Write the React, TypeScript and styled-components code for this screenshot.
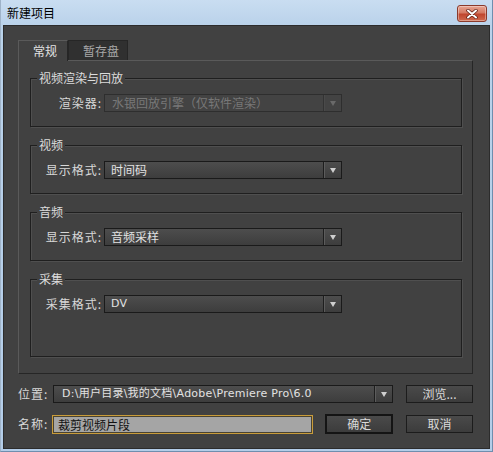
import React from "react";
import styled, { createGlobalStyle } from "styled-components";

const Global = createGlobalStyle`
  html, body { margin: 0; padding: 0; background: #c3d8ee; }
  body {
    font-family: "Noto Sans CJK SC", "Noto Sans", sans-serif;
    font-size: 12px;
  }
  * { box-sizing: border-box; }
`;

const Window = styled.div`
  width: 493px;
  height: 452px;
  display: flex;
  flex-direction: column;
  background: linear-gradient(to bottom, #c9ddf1 0px, #bad2ea 25px, #b4cde8 100%);
  border-left: 1px solid #9fb3c8;
  border-right: 1px solid #6f8eae;
  border-bottom: 1px solid #6f8eae;
`;

const TitleBar = styled.div`
  height: 25px;
  flex: none;
  display: flex;
  align-items: flex-start;
  justify-content: space-between;
  padding: 0 5px 0 6px;
`;

const Title = styled.div`
  line-height: 25px;
  color: #000;
  font-size: 12px;
`;

const CloseButton = styled.div`
  margin-top: 5px;
  width: 30px;
  height: 17px;
  border: 1px solid #8a3a2c;
  border-radius: 3px;
  background: linear-gradient(to bottom, #e8a593 0%, #d47a63 45%, #c0462e 55%, #cf6a4e 100%);
  box-shadow: inset 0 0 0 1px rgba(255, 255, 255, 0.35);
  display: flex;
  align-items: center;
  justify-content: center;
`;

const Body = styled.div`
  flex: 1;
  margin: 0 2px 3px 2px;
  background: #414141;
  border: 1px solid #2c2c2c;
  padding: 14px 16px 14px 14px;
  display: flex;
  flex-direction: column;
`;

const TabBar = styled.div`
  display: flex;
  height: 20px;
  flex: none;
`;

const Tab = styled.div<{ $active?: boolean }>`
  width: ${(p) => (p.$active ? "50px" : "60px")};
  height: ${(p) => (p.$active ? "21px" : "20px")};
  margin-bottom: ${(p) => (p.$active ? "-1px" : "0")};
  padding-left: 14px;
  line-height: 19px;
  color: ${(p) => (p.$active ? "#e2e2e2" : "#a8a8a8")};
  background: ${(p) => (p.$active ? "#414141" : "#303030")};
  border-top: 1px solid ${(p) => (p.$active ? "#5a5a5a" : "#262626")};
  border-left: 1px solid ${(p) => (p.$active ? "#5a5a5a" : "#262626")};
  border-right: 1px solid #262626;
  position: relative;
  z-index: ${(p) => (p.$active ? 1 : 0)};
`;

const Panel = styled.div`
  height: 314px;
  flex: none;
  border-top: 1px solid #5a5a5a;
  border-left: 1px solid #5a5a5a;
  border-right: 1px solid #262626;
  border-bottom: 1px solid #262626;
  padding: 17px 10px 0 11px;
  display: flex;
  flex-direction: column;
  gap: 18px;
`;

const Group = styled.div<{ $tall?: boolean }>`
  position: relative;
  border: 1px solid #1f1f1f;
  box-shadow: 1px 1px 0 #4f4f4f, inset 1px 1px 0 #4f4f4f;
  padding: ${(p) => (p.$tall ? "15px 0 43px" : "15px 0 14px")};
`;

const Legend = styled.span`
  position: absolute;
  top: -9px;
  left: 6px;
  padding: 0 2px;
  background: #414141;
  color: #dcdcdc;
  line-height: 16px;
`;

const FieldRow = styled.div`
  display: flex;
  align-items: center;
`;

const FieldLabel = styled.div`
  width: 71px;
  margin-right: 2px;
  text-align: right;
  color: #d8d8d8;
  line-height: 18px;
  letter-spacing: 1px;
`;

const SelectBox = styled.div<{ $width: number; $disabled?: boolean }>`
  width: ${(p) => p.$width}px;
  height: 18px;
  display: flex;
  border: 1px solid ${(p) => (p.$disabled ? "#2e2e2e" : "#1a1a1a")};
  background: ${(p) =>
    p.$disabled ? "#434343" : "linear-gradient(to bottom, #4d4d4d, #3d3d3d)"};
  color: ${(p) => (p.$disabled ? "#787878" : "#e2e2e2")};
`;

const SelectText = styled.div<{ $latin?: boolean; $pad: number }>`
  flex: 1;
  padding-left: ${(p) => p.$pad}px;
  line-height: 16px;
  white-space: nowrap;
  overflow: hidden;
  letter-spacing: ${(p) => (p.$latin ? "0.25px" : "0")};
  font-family: ${(p) =>
    p.$latin
      ? `"DejaVu Sans", "Noto Sans CJK SC", sans-serif`
      : `"Noto Sans CJK SC", sans-serif`};
  font-size: ${(p) => (p.$latin ? "11px" : "12px")};
`;

const ArrowCell = styled.div<{ $disabled?: boolean }>`
  width: 18px;
  flex: none;
  border-left: 1px solid ${(p) => (p.$disabled ? "#333" : "#1e1e1e")};
  box-shadow: inset 1px 0 0 ${(p) => (p.$disabled ? "#4a4a4a" : "#5c5c5c")};
  display: flex;
  align-items: center;
  justify-content: center;
`;

const Arrow = styled.div<{ $disabled?: boolean }>`
  width: 0;
  height: 0;
  border-left: 3.5px solid transparent;
  border-right: 3.5px solid transparent;
  border-top: 5px solid ${(p) => (p.$disabled ? "#6a6a6a" : "#cfcfcf")};
`;

const BottomRows = styled.div`
  margin-top: 11px;
  display: flex;
  flex-direction: column;
  gap: 11px;
`;

const BottomRow = styled.div`
  display: flex;
  align-items: center;
`;

const RowLabel = styled.div<{ $width: number }>`
  width: ${(p) => p.$width}px;
  color: #d8d8d8;
  line-height: 18px;
  letter-spacing: 1px;
`;

const Button = styled.div<{ $default?: boolean }>`
  width: ${(p) => (p.$default ? "68px" : "67px")};
  height: ${(p) => (p.$default ? "20px" : "18px")};
  margin-left: ${(p) => (p.$default ? "12px" : "13px")};
  border: ${(p) => (p.$default ? "2px solid #141414" : "1px solid #1c1c1c")};
  background: linear-gradient(to bottom, #4a4a4a, #3c3c3c);
  color: #dadada;
  display: flex;
  align-items: center;
  justify-content: center;
  line-height: 16px;
`;

const NameInput = styled.div`
  width: 262px;
  height: 19px;
  border: 1px solid #c99c3a;
  box-shadow: inset 0 0 0 1px #4a4330;
  background: #a5a5a5;
  color: #111;
  padding-left: 5px;
  line-height: 17px;
`;

type SelectProps = {
  value: string;
  width: number;
  disabled?: boolean;
  latin?: boolean;
  pad?: number;
};

const Select: React.FC<SelectProps> = ({ value, width, disabled, latin, pad = 6 }) => (
  <SelectBox $width={width} $disabled={disabled}>
    <SelectText $latin={latin} $pad={pad}>
      {value}
    </SelectText>
    <ArrowCell $disabled={disabled}>
      <Arrow $disabled={disabled} />
    </ArrowCell>
  </SelectBox>
);

const groups = [
  { title: "视频渲染与回放", label: "渲染器:", value: "水银回放引擎（仅软件渲染）", disabled: true },
  { title: "视频", label: "显示格式:", value: "时间码" },
  { title: "音频", label: "显示格式:", value: "音频采样" },
  { title: "采集", label: "采集格式:", value: "DV", latin: true, tall: true },
];

export default function App() {
  return (
    <>
      <Global />
      <Window>
        <TitleBar>
          <Title>新建项目</Title>
          <CloseButton>
            <svg width="12" height="10" viewBox="0 0 12 10">
              <path
                d="M2 1.5 L10 8.5 M10 1.5 L2 8.5"
                stroke="#5a1a10"
                strokeWidth="3.4"
                strokeLinecap="round"
              />
              <path
                d="M2 1.5 L10 8.5 M10 1.5 L2 8.5"
                stroke="#ffffff"
                strokeWidth="2"
                strokeLinecap="round"
              />
            </svg>
          </CloseButton>
        </TitleBar>
        <Body>
          <TabBar>
            <Tab $active>常规</Tab>
            <Tab>暂存盘</Tab>
          </TabBar>
          <Panel>
            {groups.map((g) => (
              <Group key={g.title} $tall={g.tall}>
                <Legend>{g.title}</Legend>
                <FieldRow>
                  <FieldLabel>{g.label}</FieldLabel>
                  <Select
                    value={g.value}
                    width={238}
                    disabled={g.disabled}
                    latin={g.latin}
                    pad={g.disabled ? 7 : 6}
                  />
                </FieldRow>
              </Group>
            ))}
          </Panel>
          <BottomRows>
            <BottomRow>
              <RowLabel $width={35}>位置:</RowLabel>
              <Select
                value="D:\用户目录\我的文档\Adobe\Premiere Pro\6.0"
                width={340}
                latin
                pad={8}
              />
              <Button>浏览...</Button>
            </BottomRow>
            <BottomRow>
              <RowLabel $width={34}>名称:</RowLabel>
              <NameInput>裁剪视频片段</NameInput>
              <Button $default>确定</Button>
              <Button>取消</Button>
            </BottomRow>
          </BottomRows>
        </Body>
      </Window>
    </>
  );
}
